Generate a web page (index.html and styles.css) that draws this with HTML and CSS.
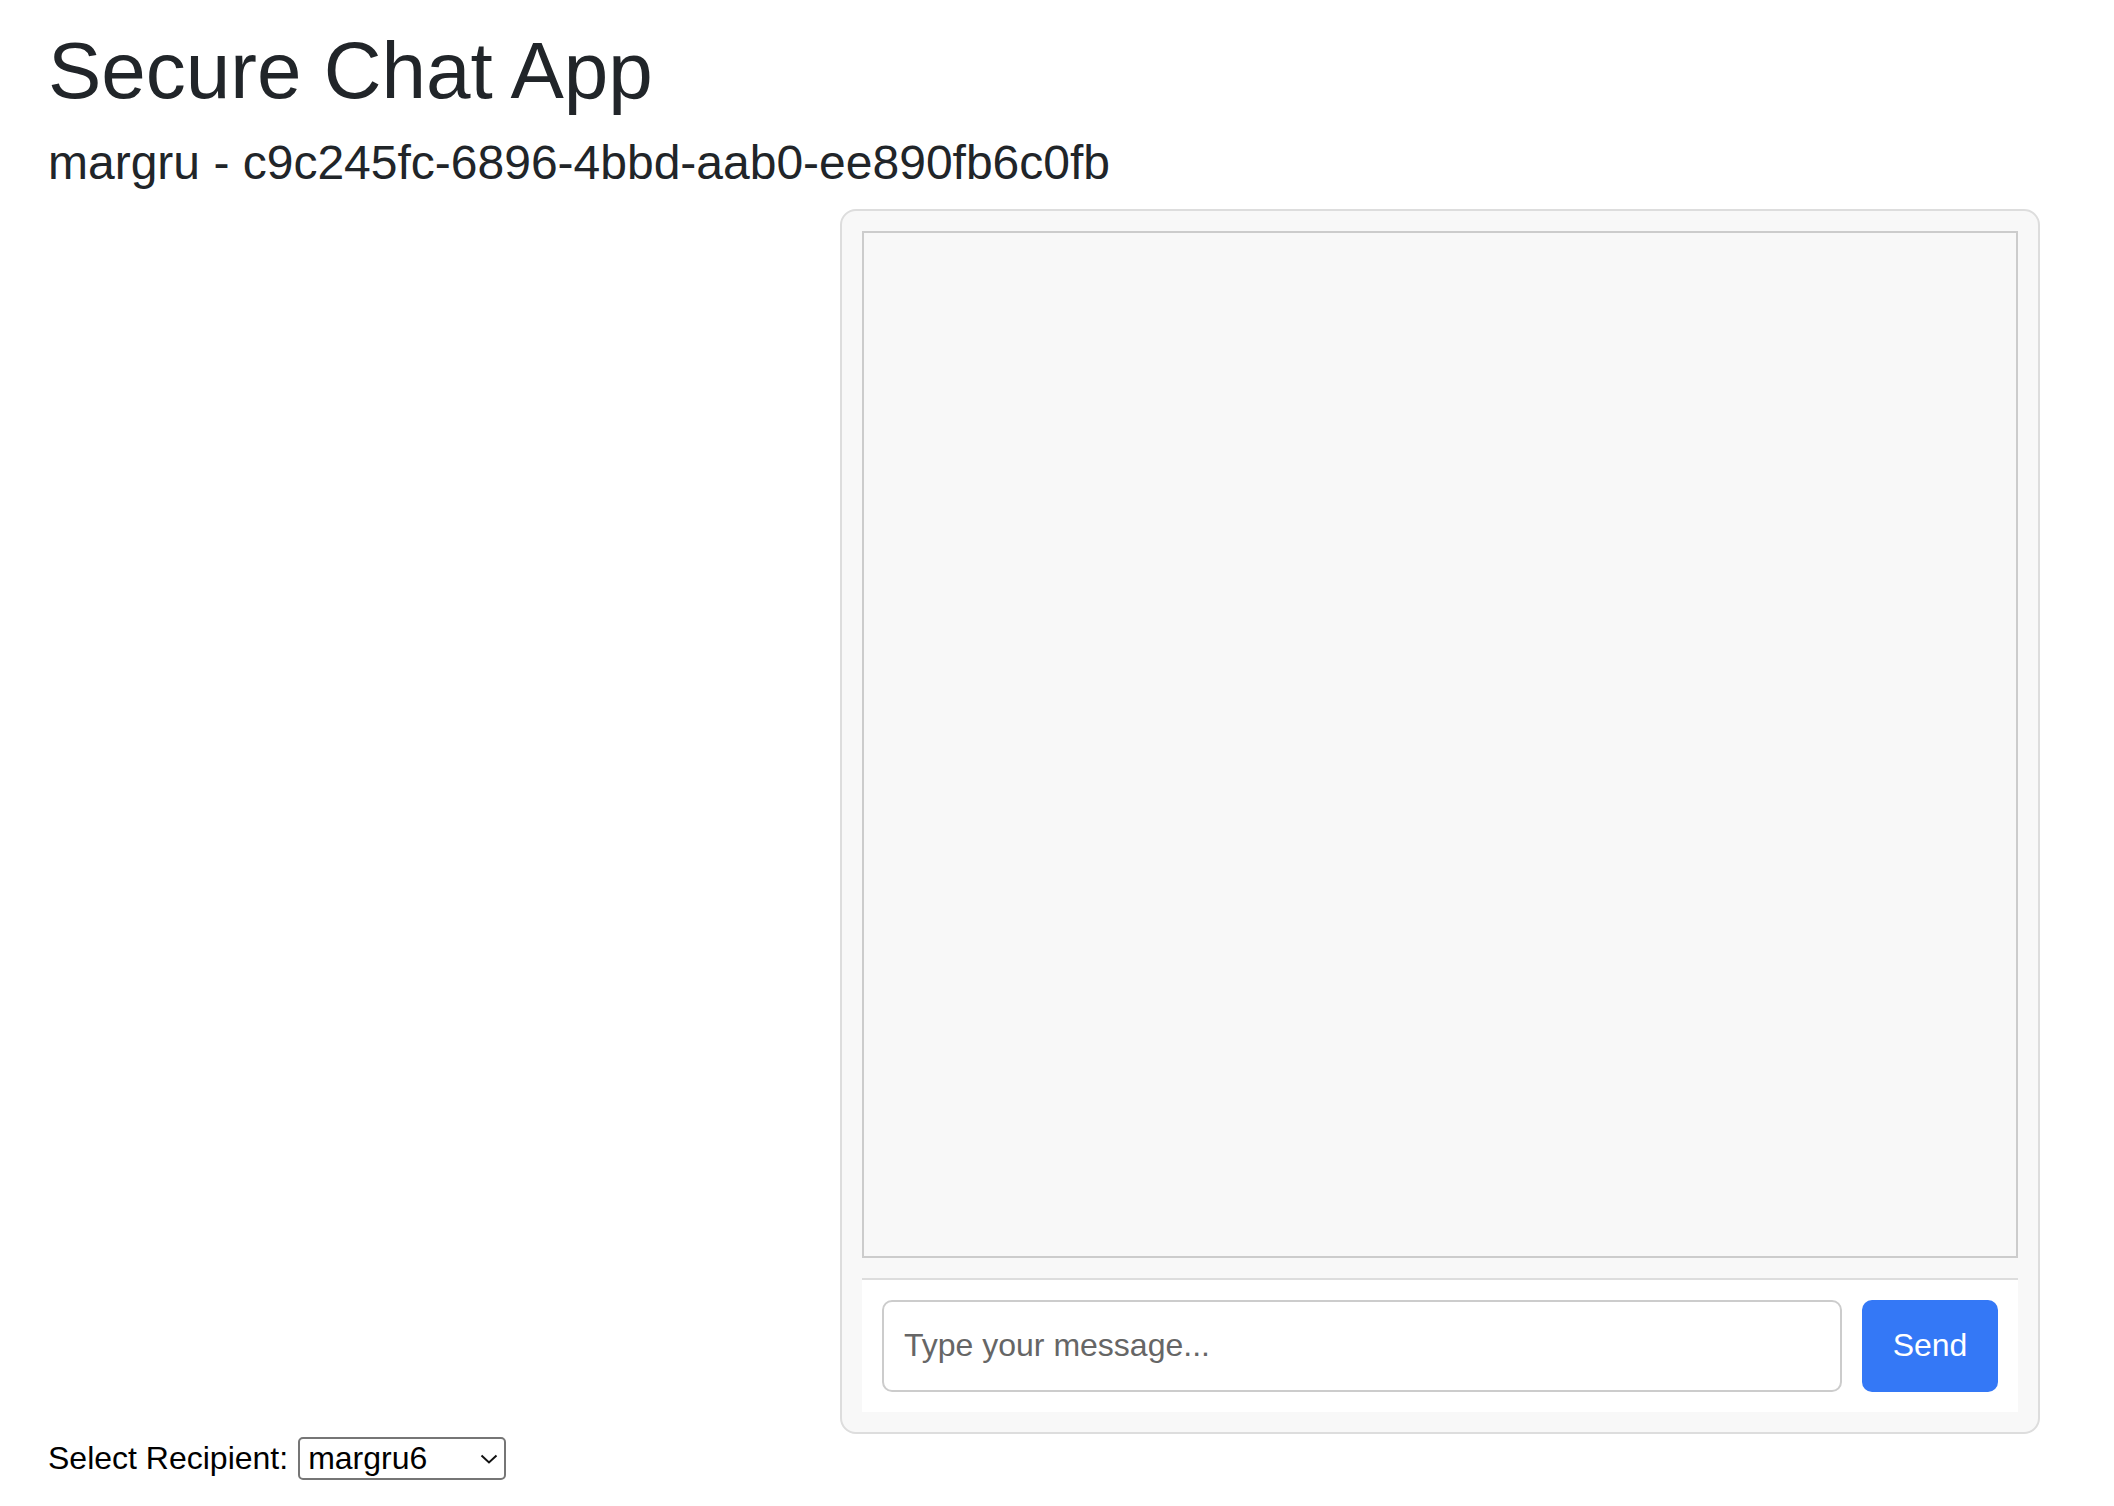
FILE: index.html
```html
<!DOCTYPE html>
<html lang="en">
<head>
<meta charset="utf-8">
<title>Secure Chat App</title>
<link rel="stylesheet" href="styles.css">
</head>
<body>
<div class="page">
  <h1 class="title">Secure Chat App</h1>
  <h4 class="subtitle">margru - c9c245fc-6896-4bbd-aab0-ee890fb6c0fb</h4>
  <div class="layout">
    <div class="users"></div>
    <div class="chat">
      <div class="messages"></div>
      <div class="composer">
        <input class="msg-input" type="text" placeholder="Type your message...">
        <button class="send-btn" type="button">Send</button>
      </div>
    </div>
  </div>
  <div class="recipient">
    <label class="recipient-label" for="recipient">Select Recipient:</label>
    <span class="select-wrap">
      <select id="recipient" class="recipient-select">
        <option>margru6</option>
      </select>
      <svg class="chevron" width="18" height="10" viewBox="0 0 18 10"><path d="M1.5 1.5 L9 8.5 L16.5 1.5" fill="none" stroke="#111" stroke-width="2"/></svg>
    </span>
  </div>
</div>
</body>
</html>
```
FILE: styles.css
```css
html, body {
  margin: 0;
  padding: 0;
  background: #fff;
}
body {
  font-family: "Liberation Sans", Arial, sans-serif;
  color: #212529;
}
.page {
  padding: 23px 74px 0 48px;
}
.title {
  margin: 0 0 15px 0;
  font-size: 80px;
  font-weight: 400;
  line-height: 1.2;
  color: #212529;
}
.subtitle {
  margin: 0 0 17px 0;
  font-size: 48px;
  font-weight: 400;
  line-height: 1.2;
  color: #212529;
}
.layout {
  display: flex;
  align-items: flex-start;
}
.users {
  flex: 1;
}
.chat {
  width: 1200px;
  box-sizing: border-box;
  border: 2px solid #dddddd;
  border-radius: 16px;
  background: #f8f8f8;
  padding: 20px;
}
.messages {
  height: 1027px;
  box-sizing: border-box;
  border: 2px solid #cccccc;
  background: #f8f8f8;
}
.composer {
  margin-top: 20px;
  border-top: 2px solid #dddddd;
  background: #fff;
  padding: 20px;
  display: flex;
  gap: 20px;
}
.msg-input {
  flex: 1;
  height: 92px;
  box-sizing: border-box;
  border: 2px solid #cccccc;
  border-radius: 10px;
  padding: 0 20px;
  font-family: "Liberation Sans", Arial, sans-serif;
  font-size: 32px;
  color: #212529;
  background: #fff;
  outline: none;
}
.msg-input::placeholder {
  color: #666666;
}
.send-btn {
  width: 136px;
  height: 92px;
  border: none;
  border-radius: 10px;
  background: #3478f6;
  color: #fff;
  font-family: "Liberation Sans", Arial, sans-serif;
  font-size: 32px;
  padding: 0;
  cursor: pointer;
}
.recipient {
  margin-top: 3px;
  display: flex;
  align-items: center;
  gap: 10px;
}
.recipient-label {
  font-size: 32px;
  color: #000;
}
.select-wrap {
  position: relative;
  display: inline-block;
}
.recipient-select {
  appearance: none;
  -webkit-appearance: none;
  width: 208px;
  height: 43px;
  box-sizing: border-box;
  border: 2px solid #767676;
  border-radius: 5px;
  background: #fff;
  padding: 0 0 0 8px;
  font-family: "Liberation Sans", Arial, sans-serif;
  font-size: 32px;
  color: #000;
  display: block;
}
.chevron {
  position: absolute;
  right: 8px;
  top: 17px;
  pointer-events: none;
}
```
